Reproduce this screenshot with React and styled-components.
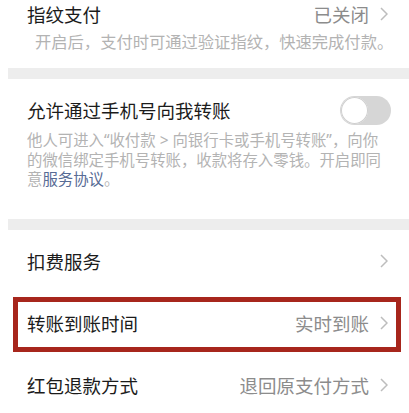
import React from 'react'
import styled, { createGlobalStyle } from 'styled-components'

const GlobalStyle = createGlobalStyle`
  body {
    margin: 0;
    background: #fff;
    font-family: "Noto Sans CJK SC", "Noto Sans", sans-serif;
  }
`

const Page = styled.div`
  width: 409px;
  height: 413px;
  overflow: hidden;
  background: #fff;
`

const Section = styled.div`
  padding: ${p => p.pad || '0'};
`

const Band = styled.div`
  height: 11px;
  margin-left: 8px;
  background: #ededed;
`

const Row = styled.div`
  position: relative;
  display: flex;
  align-items: center;
  height: ${p => p.h || 62}px;
  padding: 0 21px 0 27px;
`

const Title = styled.div`
  flex: 1;
  font-size: 18.5px;
  color: #1b1b1b;
`

const Value = styled.div`
  font-size: 18.5px;
  color: #8c8c8c;
  margin-right: 11px;
`

const Desc = styled.div`
  padding: 0 12px 0 ${p => p.indent || 27}px;
  margin-top: ${p => p.mt || 0}px;
  font-family: "Noto Sans", "Noto Sans CJK SC", sans-serif;
  font-size: ${p => p.size || 16}px;
  line-height: 19.5px;
  color: #b3b3b3;
  white-space: nowrap;
  a {
    color: #576b95;
    text-decoration: none;
  }
`

const Toggle = styled.div`
  width: 51px;
  height: 29px;
  border-radius: 15px;
  background: #d6d6d6;
  margin-right: -3px;
  display: flex;
  align-items: center;
  padding: 1px;
  box-sizing: border-box;
`

const Knob = styled.div`
  width: 27px;
  height: 27px;
  border-radius: 50%;
  background: #fff;
  box-shadow: 0 0 0 1px #cfcfcf inset;
`

const Highlight = styled.div`
  position: absolute;
  left: 13px;
  right: 8px;
  top: 5px;
  bottom: 2px;
  border: 5px solid #a7261c;
  pointer-events: none;
`

const Chevron = () => (
  <svg width="8" height="14" viewBox="0 0 8 14">
    <path d="M1 1l6 6-6 6" fill="none" stroke="#bdbdbd" strokeWidth="1.5" />
  </svg>
)

const LinkRow = ({ title, value, marked }) => (
  <Row>
    <Title>{title}</Title>
    {value && <Value>{value}</Value>}
    <Chevron />
    {marked && <Highlight />}
  </Row>
)

export default function App() {
  return (
    <Page>
      <GlobalStyle />
      <Section pad="0 0 15.5px 0">
        <Row h={28}>
          <Title>指纹支付</Title>
          <Value>已关闭</Value>
          <Chevron />
        </Row>
        <Desc indent={35} mt={5} size={16.3}>开启后，支付时可通过验证指纹，快速完成付款。</Desc>
      </Section>
      <Band />
      <Section pad="14px 0 29px 0">
        <Row h={34}>
          <Title>允许通过手机号向我转账</Title>
          <Toggle>
            <Knob />
          </Toggle>
        </Row>
        <Desc mt={4} size={15.4}>
          他人可进入“收付款 &gt; 向银行卡或手机号转账”，向你<br />
          的微信绑定手机号转账，收款将存入零钱。开启即同<br />
          意<a>服务协议</a>。
        </Desc>
      </Section>
      <Band />
      <LinkRow title="扣费服务" />
      <LinkRow title="转账到账时间" value="实时到账" marked />
      <LinkRow title="红包退款方式" value="退回原支付方式" />
    </Page>
  )
}
